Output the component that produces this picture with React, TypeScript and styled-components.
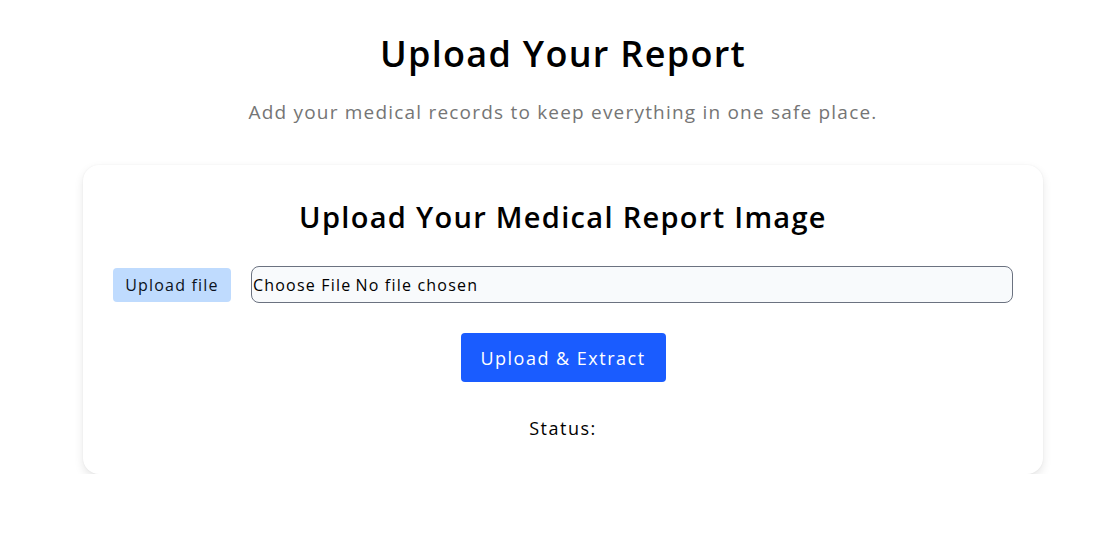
import styled, { createGlobalStyle } from "styled-components";
import { useState } from "react";

const GlobalStyle = createGlobalStyle`
  * { box-sizing: border-box; }
  body {
    margin: 0;
    background: #ffffff;
    font-family: "Open Sans", "Liberation Sans", sans-serif;
    color: #000;
  }
`;

const Page = styled.main`
  display: flex;
  flex-direction: column;
  align-items: center;
  padding: 30px 0 0 6px;
`;

const Title = styled.h1`
  margin: 0;
  font-size: 36px;
  font-weight: 600;
  line-height: 48px;
  letter-spacing: 1.3px;
`;

const Subtitle = styled.p`
  margin: 20px 0 0;
  font-size: 19px;
  line-height: 28px;
  letter-spacing: 1.2px;
  color: #757575;
`;

const Card = styled.section`
  width: 960px;
  margin-top: 39px;
  padding: 32px 30px 34px;
  background: #fff;
  border-radius: 16px;
  box-shadow: 0 4px 10px rgba(0, 0, 0, 0.1), 0 0 2px rgba(0, 0, 0, 0.05);
  display: flex;
  flex-direction: column;
  align-items: center;
`;

const CardTitle = styled.h2`
  margin: 0;
  font-size: 29px;
  font-weight: 600;
  line-height: 40px;
  letter-spacing: 1.3px;
`;

const FileRow = styled.div`
  align-self: stretch;
  margin-top: 29px;
  display: flex;
  align-items: center;
  gap: 20px;
`;

const Label = styled.label`
  flex: none;
  width: 118px;
  padding: 6px 0;
  text-align: center;
  background: #bfdbfe;
  border-radius: 4px;
  font-size: 16px;
  line-height: 22px;
  letter-spacing: 1.2px;
  color: #0b1220;
`;

const FileInput = styled.input`
  flex: 1;
  height: 37px;
  padding: 7px 1px 0;
  border: 1px solid #6b7280;
  border-radius: 8px;
  background: #f8fafc;
  font-family: inherit;
  font-size: 16px;
  letter-spacing: 1.2px;
  color: #000;

  &::file-selector-button {
    border: none;
    background: transparent;
    padding: 0;
    margin-right: 4px;
    font: inherit;
    letter-spacing: inherit;
    color: inherit;
  }
`;

const SubmitButton = styled.button`
  margin-top: 30px;
  width: 205px;
  height: 49px;
  border: none;
  border-radius: 4px;
  background: #1a5cff;
  color: #fff;
  font-family: inherit;
  font-size: 18px;
  letter-spacing: 1.5px;
  cursor: pointer;
`;

const Status = styled.p`
  margin: 34px 0 0;
  font-size: 18px;
  line-height: 24px;
  letter-spacing: 1.5px;
`;

function App() {
  const [status] = useState<string>("");
  return (
    <Page>
      <GlobalStyle />
      <Title>Upload Your Report</Title>
      <Subtitle>Add your medical records to keep everything in one safe place.</Subtitle>
      <Card>
        <CardTitle>Upload Your Medical Report Image</CardTitle>
        <FileRow>
          <Label htmlFor="report">Upload file</Label>
          <FileInput id="report" type="file" accept="image/*" />
        </FileRow>
        <SubmitButton>Upload &amp; Extract</SubmitButton>
        <Status>Status: {status}</Status>
      </Card>
    </Page>
  );
}

export default App;
